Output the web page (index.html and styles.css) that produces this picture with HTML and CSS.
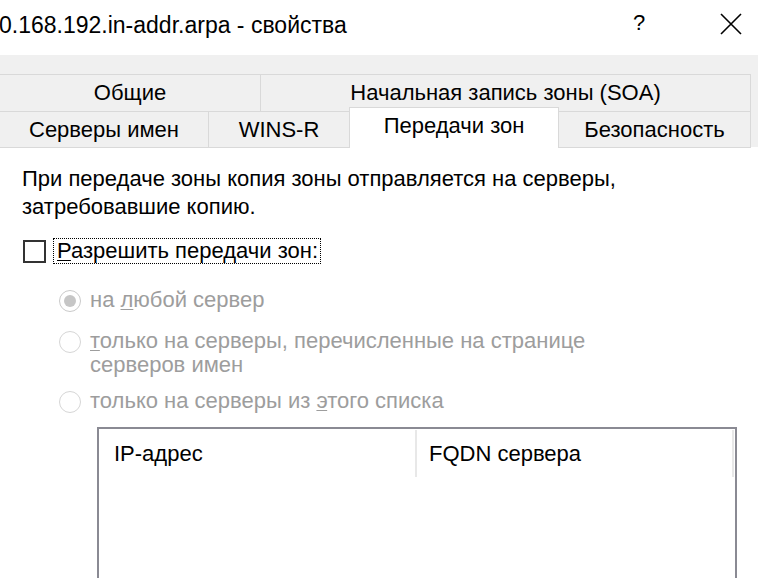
FILE: index.html
```html
<!DOCTYPE html>
<html lang="ru">
<head>
<meta charset="utf-8">
<title>свойства</title>
<link rel="stylesheet" href="styles.css">
</head>
<body>
<div class="window">
  <div class="titlebar">
    <div class="title">0.168.192.in-addr.arpa - свойства</div>
    <div class="tb-help">?</div>
    <div class="tb-close">
      <svg width="22" height="22" viewBox="0 0 22 22"><path d="M1 1 L21 21 M21 1 L1 21" stroke="#000" stroke-width="1.6" fill="none"/></svg>
    </div>
  </div>
  <div class="tabs">
    <div class="tabrow">
      <div class="tab w260">Общие</div>
      <div class="tab w490">Начальная запись зоны (SOA)</div>
    </div>
    <div class="tabrow row2">
      <div class="tab w208">Серверы имен</div>
      <div class="tab w142">WINS-R</div>
      <div class="tab active">Передачи зон</div>
      <div class="tab w192">Безопасность</div>
    </div>
  </div>
  <div class="panel">
    <p class="desc">При передаче зоны копия зоны отправляется на серверы,<br>затребовавшие копию.</p>
    <div class="check-row">
      <span class="checkbox"></span>
      <span class="focus"><u>Р</u>азрешить передачи зон:</span>
    </div>
    <div class="radios">
      <div class="radio-row r1">
        <span class="radio checked"><span class="dot"></span></span>
        <span class="rlabel">на <u>л</u>юбой сервер</span>
      </div>
      <div class="radio-row r2">
        <span class="radio"></span>
        <span class="rlabel"><u>т</u>олько на серверы, перечисленные на странице<br>серверов имен</span>
      </div>
      <div class="radio-row r3">
        <span class="radio"></span>
        <span class="rlabel">только на серверы из <u>э</u>того списка</span>
      </div>
    </div>
    <div class="listbox">
      <div class="lhead">
        <div class="col c1">IP-адрес</div>
        <div class="col c2">FQDN сервера</div>
      </div>
    </div>
  </div>
</div>
</body>
</html>
```
FILE: styles.css
```css
html, body {
  margin: 0;
  padding: 0;
  background: #ffffff;
  overflow: hidden;
}
body {
  width: 758px;
  height: 578px;
  font-family: "Liberation Sans", Arial, sans-serif;
  color: #000;
}
.window {
  width: 758px;
  height: 578px;
  display: flex;
  flex-direction: column;
  overflow: hidden;
}
.titlebar {
  height: 55px;
  flex: none;
  display: flex;
  align-items: flex-start;
  background: #fff;
}
.title {
  font-size: 23px;
  line-height: 24px;
  padding-top: 13px;
  margin-left: -1px;
  flex: 1;
  white-space: nowrap;
}
.tb-help {
  font-size: 22px;
  line-height: 24px;
  padding-top: 11px;
  width: 20px;
  margin-right: 71px;
  text-align: center;
}
.tb-close {
  padding-top: 13px;
  margin-right: 16px;
  height: 22px;
}
.tb-close svg { display: block; }
.tabs {
  flex: none;
  background: #f0f0f0;
  padding-top: 19px;
  width: 758px;
}
.tabrow {
  display: flex;
  width: 751px;
}
.tab {
  box-sizing: border-box;
  height: 37px;
  border-top: 1px solid #d9d9d9;
  border-right: 1px solid #d9d9d9;
  font-size: 22px;
  line-height: 36px;
  text-align: center;
  white-space: nowrap;
  background: #f0f0f0;
}
.row2 .tab {
  height: 36px;
  line-height: 35px;
}
.w260 { width: 261px; }
.w490 { width: 490px; }
.w208 { width: 209px; }
.w142 { width: 141px; }
.w192 { width: 192px; }
.row2 .tab.active {
  background: #fff;
  height: 41px;
  width: 210px;
  margin-top: -4px;
  margin-bottom: -1px;
  margin-left: -1px;
  border-left: 1px solid #d9d9d9;
  line-height: 35px;
  position: relative;
  z-index: 1;
}
.panel {
  flex: 1;
  background: #fff;
  border-top: 1px solid #d9d9d9;
  width: 751px;
  padding-left: 22px;
  box-sizing: border-box;
}
.desc {
  margin: 0;
  padding-top: 17px;
  font-size: 22px;
  line-height: 28px;
  white-space: nowrap;
}
.check-row {
  display: flex;
  align-items: center;
  margin-top: 17px;
  height: 26px;
}
.checkbox {
  box-sizing: border-box;
  width: 23px;
  height: 23px;
  border: 2px solid #333;
  background: #fff;
  margin-left: 1px;
}
.focus {
  margin-left: 8px;
  outline: 1px dotted #000;
  font-size: 22px;
  line-height: 24px;
  padding: 0 2px 0 3px;
  white-space: nowrap;
}
.focus u, .rlabel u {
  text-decoration-thickness: 1px;
  text-underline-offset: 2px;
}
.radios {
  padding-left: 37px;
  margin-top: 24px;
  color: #9d9d9d;
  font-size: 22px;
}
.radio-row {
  display: flex;
  align-items: flex-start;
  line-height: 24px;
  white-space: nowrap;
}
.r1 { margin-bottom: 17px; }
.r2 { margin-bottom: 12px; }
.radio {
  box-sizing: border-box;
  flex: none;
  width: 22px;
  height: 22px;
  margin-top: 2px;
  border: 1.5px solid #d6d6d6;
  border-radius: 50%;
  display: flex;
  align-items: center;
  justify-content: center;
  margin-right: 9px;
}
.radio.checked { border-color: #cacaca; }
.dot {
  width: 12px;
  height: 12px;
  border-radius: 50%;
  background: #c6c6c6;
}
.listbox {
  margin-left: 75px;
  margin-top: 14px;
  width: 640px;
  height: 220px;
  box-sizing: border-box;
  border: 2px solid #8a8a93;
  border-bottom: none;
  background: #fff;
}
.lhead {
  display: flex;
  height: 48px;
  padding-top: 1px;
}
.col {
  box-sizing: border-box;
  font-size: 22px;
  line-height: 48px;
  padding-left: 15px;
  border-right: 2px solid #e8e8e8;
  height: 47px;
  white-space: nowrap;
}
.c1 { width: 318px; }
.c2 { width: 317px; padding-left: 12px; }
```
